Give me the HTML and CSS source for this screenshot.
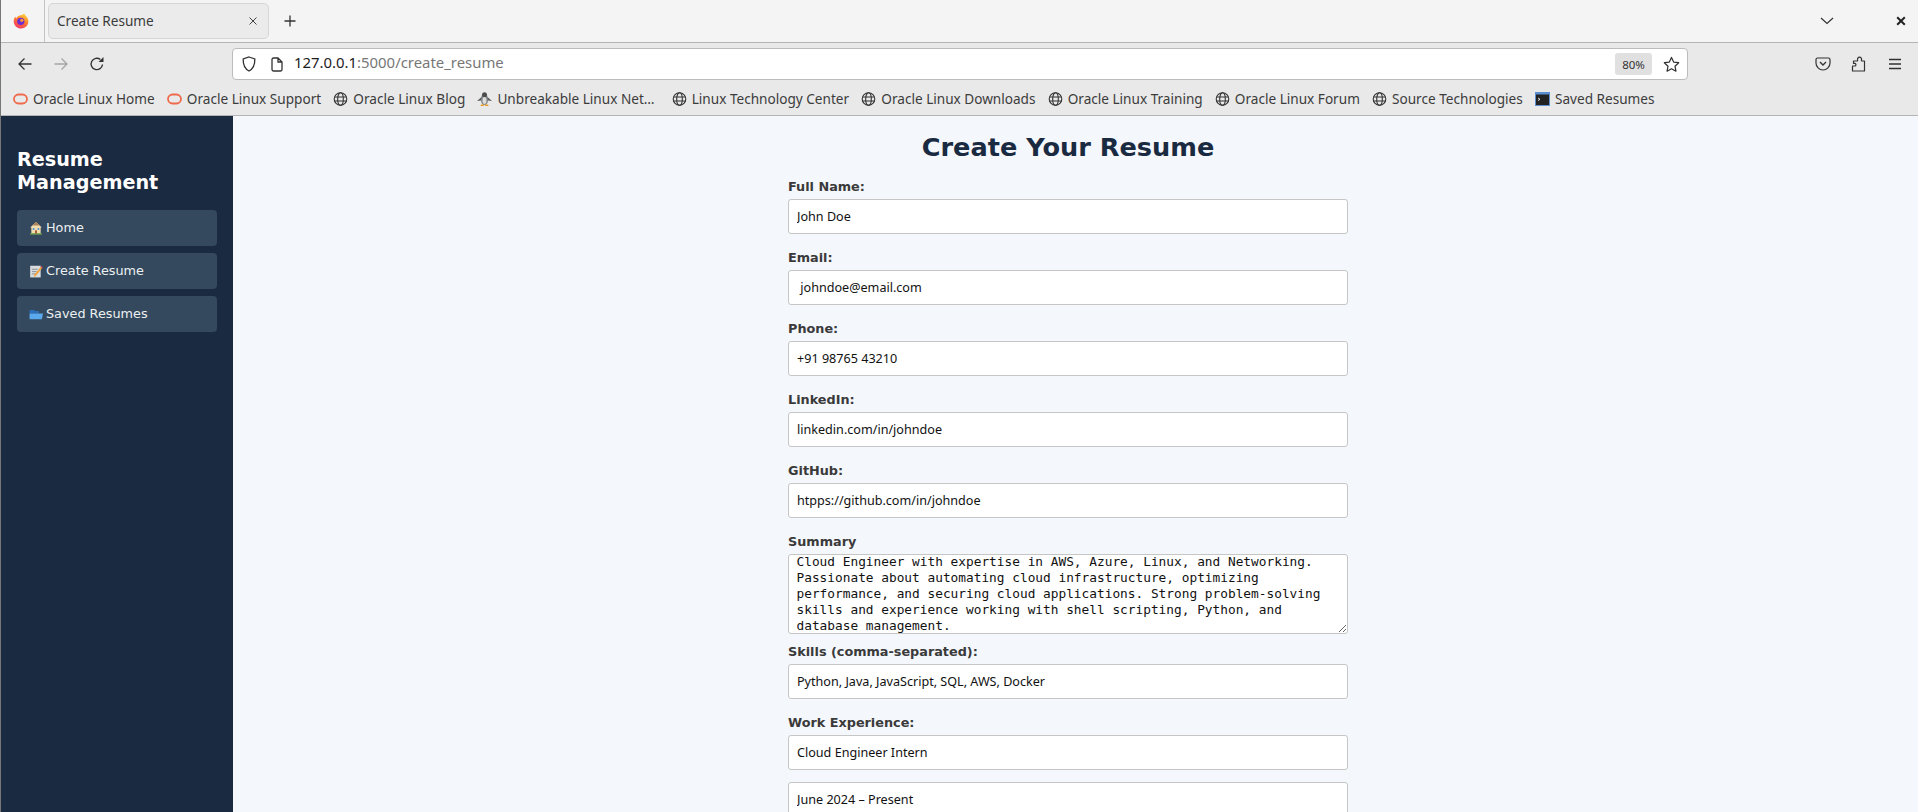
FILE: index.html
```html
<!DOCTYPE html>
<html lang="en">
<head>
<meta charset="utf-8">
<title>Create Resume</title>
<link rel="stylesheet" href="styles.css">
</head>
<body>
<svg class="defs" width="0" height="0" aria-hidden="true">
  <symbol id="globe" viewBox="0 0 15 14"><g fill="none" stroke="#333" stroke-width="1.100"><circle cx="7.500" cy="7" r="6.300"/><ellipse cx="7.500" cy="7" rx="2.800" ry="6.300"/><path d="M1.400 5h12.200M1.400 9h12.200"/></g></symbol>
  <symbol id="oracle" viewBox="0 0 15 14"><rect x="1" y="2.500" width="13" height="9" rx="4.500" fill="none" stroke="#ef6a4c" stroke-width="1.800"/></symbol>
</svg>
<div class="window">
  <header class="tabbar">
    <div class="ff-cell">
      <svg class="ff-logo" viewBox="0 0 16 16"><defs><linearGradient id="ffg" x1="0.7" y1="0" x2="0.2" y2="1"><stop offset="0" stop-color="#ffd53a"/><stop offset="0.45" stop-color="#ff7a2f"/><stop offset="1" stop-color="#f2306b"/></linearGradient></defs><path d="M11.200 0.600c.4 1.300 1.200 1.900 2.200 3 1.400 1.500 2.100 3.200 2 5-.1 4-3.300 7-7.300 7C4 15.600 .7 12.400 .7 8.300c0-1.800.6-3.400 1.700-4.700.1 1 .4 1.500 .9 2 .4-1.500 1.500-2.500 3.300-3 1.900-.5 3.600-.9 4.600-2z" fill="url(#ffg)"/><circle cx="7.800" cy="8.300" r="3.600" fill="#6d2bd0"/><circle cx="8.800" cy="7.300" r="1.600" fill="#ff9a3c"/></svg>
    </div>
    <div class="tab">
      <span class="tab-title">Create Resume</span>
      <svg class="ic-tabx" viewBox="0 0 10 10"><path d="M1.500 1.500l7 7M8.500 1.500l-7 7" stroke="#444" stroke-width="1" fill="none"/></svg>
    </div>
    <svg class="ic-plus" viewBox="0 0 12 12"><path d="M6 .5v11M.5 6h11" stroke="#333" stroke-width="1.300" fill="none"/></svg>
    <div class="spacer"></div>
    <svg class="ic-chev" viewBox="0 0 14 8"><path d="M1 1l6 5.500L13 1" stroke="#333" stroke-width="1.200" fill="none"/></svg>
    <svg class="ic-close" viewBox="0 0 10 10"><path d="M1.200 1.200l7.600 7.600M8.800 1.200L1.200 8.800" stroke="#222" stroke-width="2" fill="none"/></svg>
  </header>

  <nav class="navbar">
    <div class="navbtn"><svg class="ic" viewBox="0 0 16 16"><path d="M14.500 8H2M7.500 2.500L2 8l5.500 5.500" stroke="#333" stroke-width="1.300" fill="none"/></svg></div>
    <div class="navbtn"><svg class="ic" viewBox="0 0 16 16"><path d="M1.500 8H14M8.500 2.500L14 8l-5.500 5.500" stroke="#a5a5a5" stroke-width="1.300" fill="none"/></svg></div>
    <div class="navbtn"><svg class="ic" viewBox="0 0 16 16"><path d="M13.500 8.500A5.700 5.700 0 1 1 11.400 3.500" stroke="#333" stroke-width="1.400" fill="none"/><path d="M14.500 1v5h-5z" fill="#333"/></svg></div>
    <div class="urlbar">
      <svg class="ic-shield" viewBox="0 0 14 16"><path d="M7 1l5.800 2c.2 5.500-1.500 9.700-5.800 12C2.700 12.700 1 8.500 1.200 3z" stroke="#333" stroke-width="1.300" fill="none"/></svg>
      <svg class="ic-page" viewBox="0 0 12 15"><path d="M1 2.500A1.500 1.500 0 0 1 2.500 1H7l4 4v7.500a1.500 1.500 0 0 1-1.500 1.500h-7A1.500 1.500 0 0 1 1 12.500zM7 1v4h4" stroke="#333" stroke-width="1.300" fill="none"/></svg>
      <span class="url"><span class="url-host">127.0.0.1</span>:5000/create_resume</span>
      <div class="spacer"></div>
      <span class="zoom-pill">80%</span>
      <svg class="ic-star" viewBox="0 0 18 18"><path d="M9 1.500l2.300 4.900 5.300.7-3.900 3.700 1 5.300L9 13.500l-4.700 2.600 1-5.300L1.400 7.100l5.300-.7z" stroke="#333" stroke-width="1.300" fill="none" stroke-linejoin="round"/></svg>
    </div>
    <div class="spacer"></div>
    <div class="navbtn"><svg class="ic" viewBox="0 0 16 16"><path d="M2.500 2h11A1.500 1.500 0 0 1 15 3.500V7a7 7 0 0 1-14 0V3.500A1.500 1.500 0 0 1 2.500 2z" stroke="#333" stroke-width="1.200" fill="none"/><path d="M5 6l3 3 3-3" stroke="#333" stroke-width="1.400" fill="none"/></svg></div>
    <div class="navbtn"><svg class="ic" viewBox="0 0 16 16"><path d="M1.500 10h2.300c1.500 0 1.500-2.700 0-2.700H2.500V5H6c.6 0 .8-.4.6-1C6.200 2.600 7 1.200 8.500 1.200S11 2.600 10.500 4c-.2.600 0 1 .6 1h2.400v10H1.500z" stroke="#333" stroke-width="1.200" fill="none" stroke-linejoin="round"/></svg></div>
    <div class="navbtn"><svg class="ic" viewBox="0 0 16 16"><path d="M2 3.500h12M2 8h12M2 12.500h12" stroke="#333" stroke-width="1.300" fill="none"/></svg></div>
  </nav>

  <div class="bookmarks">
    <a class="bm"><svg class="bm-ic"><use href="#oracle"/></svg>Oracle Linux Home</a>
    <a class="bm"><svg class="bm-ic"><use href="#oracle"/></svg>Oracle Linux Support</a>
    <a class="bm"><svg class="bm-ic"><use href="#globe"/></svg>Oracle Linux Blog</a>
    <a class="bm bm-trunc"><svg class="bm-ic" viewBox="0 0 15 14"><ellipse cx="7.500" cy="7.500" rx="3.600" ry="5.500" fill="#80868c"/><circle cx="7.500" cy="2.800" r="2.500" fill="#4c4c4c"/><path d="M4.500 5L0 9l4-.5zM10.500 5l4.500 4-4-.5z" fill="#5c5c5c"/><ellipse cx="7.500" cy="8.500" rx="2" ry="3.400" fill="#dcdcdc"/><path d="M3 14h3.800v-1.500H4.500zM12 14H8.200v-1.500h2.300z" fill="#e79a1e"/></svg>Unbreakable Linux Net…</a>
    <a class="bm"><svg class="bm-ic"><use href="#globe"/></svg>Linux Technology Center</a>
    <a class="bm"><svg class="bm-ic"><use href="#globe"/></svg>Oracle Linux Downloads</a>
    <a class="bm"><svg class="bm-ic"><use href="#globe"/></svg>Oracle Linux Training</a>
    <a class="bm"><svg class="bm-ic"><use href="#globe"/></svg>Oracle Linux Forum</a>
    <a class="bm"><svg class="bm-ic"><use href="#globe"/></svg>Source Technologies</a>
    <a class="bm"><svg class="bm-ic" viewBox="0 0 15 14"><rect x="0" y="0" width="15" height="14" fill="#5b8fd0"/><rect x="1" y="2.500" width="13" height="10.500" fill="#222"/><path d="M3 6l2 1.300-2 1.300" stroke="#eee" stroke-width=".9" fill="none"/></svg>Saved Resumes</a>
  </div>

  <div class="page">
    <aside class="sidebar">
      <h2 class="side-title">Resume Management</h2>
      <a class="side-link"><svg class="emoji" viewBox="0 0 12 12"><path d="M6 .8L1 5.500h1V11h8V5.500h1z" fill="#f3dcae"/><path d="M6 .8L2.800 3.800h6.400z" fill="#a9825c"/><rect x="1" y="10.500" width="10" height="1.200" fill="#6aa84f"/><rect x="3.200" y="6" width="1.500" height="1.700" fill="#5b9bd5"/><rect x="7.300" y="6" width="1.500" height="1.700" fill="#5b9bd5"/><rect x="5.200" y="8" width="1.600" height="2.700" fill="#a0522d"/></svg>Home</a>
      <a class="side-link"><svg class="emoji" viewBox="0 0 12 12"><rect x="1" y="1.500" width="9" height="10" fill="#d9dde0"/><path d="M2.500 4.500h5M2.500 6.500h4M2.500 8.500h3" stroke="#7a8288" stroke-width=".7"/><path d="M4.500 9.300L10 2.500l1.300 1-5.500 6.800-1.600.6z" fill="#f2a33a"/><path d="M10 2.500l.6-.8 1.300 1-.6.800z" fill="#e0455a"/></svg>Create Resume</a>
      <a class="side-link"><svg class="emoji" viewBox="0 0 12 12"><path d="M.5 2.500h4l1 1h3v2H.5z" fill="#2a70b8"/><path d="M.5 10.500V5.500h11.500l-1 5z" fill="#5aa9ec"/></svg>Saved Resumes</a>
    </aside>
    <main class="main">
      <h1 class="page-title">Create Your Resume</h1>
      <form class="form">
        <label class="lbl">Full Name:</label>
        <input class="fld" type="text" value="John Doe">
        <label class="lbl">Email:</label>
        <input class="fld" type="text" value=" johndoe@email.com">
        <label class="lbl">Phone:</label>
        <input class="fld" type="text" value="+91 98765 43210">
        <label class="lbl">LinkedIn:</label>
        <input class="fld" type="text" value="linkedin.com/in/johndoe">
        <label class="lbl">GitHub:</label>
        <input class="fld" type="text" value="htpps://github.com/in/johndoe">
        <label class="lbl">Summary</label>
        <textarea class="area" id="summary">Cloud Engineer with expertise in AWS, Azure, Linux, and Networking. Passionate about automating cloud infrastructure, optimizing performance, and securing cloud applications. Strong problem-solving skills and experience working with shell scripting, Python, and database management.</textarea>
        <label class="lbl">Skills (comma-separated):</label>
        <input class="fld" type="text" value="Python, Java, JavaScript, SQL, AWS, Docker">
        <label class="lbl">Work Experience:</label>
        <input class="fld fld-tight" type="text" value="Cloud Engineer Intern">
        <input class="fld" type="text" value="June 2024 – Present">
      </form>
    </main>
  </div>
</div>
<script src="scroll.js"></script>
</body>
</html>
```

FILE: styles.css
```css
* { box-sizing: border-box; }
html, body { margin: 0; height: 100%; overflow: hidden; }
body { font-family: "Noto Sans", sans-serif; color: #333; background: #f4f7fc; }
.defs { display: block; height: 0; }
.window { height: 812px; display: flex; flex-direction: column; border-left: 1px solid #777; overflow: hidden; }
.spacer { flex: 1; }

.tabbar { height: 43px; flex: none; display: flex; align-items: center; background: #f4f4f4; border-bottom: 1px solid #b4b4b4; }
.ff-cell { width: 44px; height: 42px; padding-right: 3px; display: flex; align-items: center; justify-content: center; border-right: 1px solid #c4c4c4; }
.ff-logo { width: 16px; height: 16px; }
.tab { width: 221px; height: 36px; margin-left: 3px; padding: 0 10px 1px 8px; display: flex; align-items: center; justify-content: space-between; background: #ebebeb; border: 1px solid #d6d6d6; border-radius: 5px; font-size: 13.600px; color: #3c3c3c; }
.ic-tabx { width: 10px; height: 10px; }
.ic-plus { width: 12px; height: 12px; margin-left: 15px; }
.ic-chev { width: 14px; height: 8px; margin-right: 62px; }
.ic-close { width: 10px; height: 10px; margin-right: 12px; }

.navbar { height: 42px; flex: none; display: flex; align-items: center; padding-left: 6px; padding-right: 5px; background: #e9e9e9; }
.navbtn { width: 36px; height: 32px; display: flex; align-items: center; justify-content: center; }
.ic { width: 16px; height: 16px; }
.urlbar { width: 1456px; height: 32px; margin-left: 117px; padding: 0 6px 0 9px; display: flex; align-items: center; background: #fff; border: 1px solid #bcbcbc; border-radius: 4px; }
.ic-shield { width: 14px; height: 16px; }
.ic-page { width: 12px; height: 15px; margin-left: 15px; }
.url { margin: 0 0 4px 11px; font-size: 14.900px; color: #777; }
.url-host { color: #1c1c1c; }
.zoom-pill { width: 37px; height: 22px; margin-right: 11px; display: flex; align-items: center; justify-content: center; background: #e0e0e0; border-radius: 3px; font-size: 11.500px; color: #333; }
.ic-star { width: 17px; height: 17px; margin-right: 1px; }

.bookmarks { height: 31px; flex: none; display: flex; align-items: center; gap: 12.200px; padding-left: 12px; padding-bottom: 3px; background: #e9e9e9; border-bottom: 1px solid #b4b4b4; font-size: 13.600px; color: #3c3c3c; white-space: nowrap; }
.bm { display: flex; align-items: center; gap: 5px; }
.bm-trunc { margin-right: 5px; }
.bm-ic { width: 15px; height: 14px; flex: none; }

.page { flex: 1; min-height: 0; display: flex; }
.sidebar { width: 232px; flex: none; padding: 32px 16px 0; background: #1a2a41; color: #fff; font-family: "DejaVu Sans", sans-serif; }
.side-title { margin: 0 0 16px; font-size: 19.200px; line-height: 23px; font-weight: 700; }
.side-link { height: 35.500px; margin-bottom: 7.500px; padding-left: 11.500px; display: flex; align-items: center; gap: 3.500px; background: #34495e; border-radius: 4px; font-size: 12.800px; color: #ecf0f1; }
.emoji { width: 14px; height: 14px; flex: none; }

.main { flex: 1; min-width: 0; padding: 16px 31px 0 16px; font-family: "DejaVu Sans", sans-serif; }
.page-title { margin: 0 0 17px; text-align: center; font-size: 25.600px; line-height: 30px; font-weight: 700; color: #1a2a41; }
.form { width: 560px; margin: 0 auto; }
.lbl { display: block; height: 15px; margin-bottom: 5px; font-size: 12.800px; line-height: 15px; font-weight: 700; color: #3a3a3a; }
.fld { display: block; width: 100%; height: 35px; margin: 0 0 16px; padding: 0 8px; background: #fff; border: 1px solid #c6c6c6; border-radius: 3px; font-family: "Noto Sans", sans-serif; font-size: 12.600px; color: #111; }
.fld-tight { margin-bottom: 12.500px; }
.area { display: block; width: 100%; height: 79.500px; margin: 0 0 10px; padding: 6.400px 7.500px; background: #fff; border: 1px solid #c6c6c6; border-radius: 3px; font-family: "DejaVu Sans Mono", monospace; font-size: 12.800px; line-height: 16px; color: #111; overflow: hidden; resize: both; }
```

FILE: scroll.js
```js
document.getElementById("summary").scrollTop = 7;
```
